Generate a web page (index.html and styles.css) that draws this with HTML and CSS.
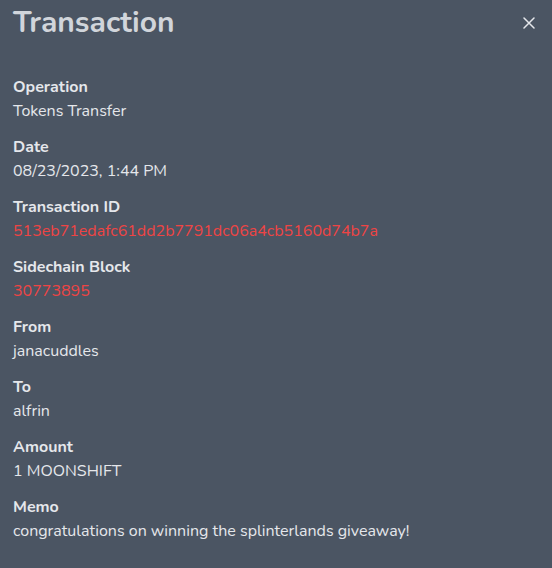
FILE: index.html
```html
<!DOCTYPE html>
<html>
<head>
<meta charset="utf-8">
<link rel="stylesheet" href="styles.css">
</head>
<body>
<div class="modal">
  <div class="header">
    <h1 class="title">Transaction</h1>
    <button class="close" aria-label="Close">
      <svg width="12" height="12" viewBox="0 0 12 12"><path d="M1 1L11 11M11 1L1 11" stroke="#e5e7eb" stroke-width="1.5" stroke-linecap="round"/></svg>
    </button>
  </div>
  <dl class="fields">
    <div class="field"><dt>Operation</dt><dd>Tokens Transfer</dd></div>
    <div class="field"><dt>Date</dt><dd>08/23/2023, 1:44 PM</dd></div>
    <div class="field"><dt>Transaction ID</dt><dd class="link">513eb71edafc61dd2b7791dc06a4cb5160d74b7a</dd></div>
    <div class="field"><dt>Sidechain Block</dt><dd class="link">30773895</dd></div>
    <div class="field"><dt>From</dt><dd>janacuddles</dd></div>
    <div class="field"><dt>To</dt><dd>alfrin</dd></div>
    <div class="field"><dt>Amount</dt><dd>1 MOONSHIFT</dd></div>
    <div class="field"><dt>Memo</dt><dd>congratulations on winning the splinterlands giveaway!</dd></div>
  </dl>
</div>
</body>
</html>
```
FILE: styles.css
```css
html, body {
  margin: 0;
  padding: 0;
  background: #4b5563;
  height: 100%;
}
body {
  font-family: "Nunito", "Open Sans", sans-serif;
  color: #e5e7eb;
}
.modal {
  padding: 0 13px;
}
.header {
  display: flex;
  justify-content: space-between;
  align-items: center;
  height: 46px;
}
.title {
  margin: 0;
  font-size: 30px;
  font-weight: 700;
  color: #d1d5db;
  line-height: 36px;
}
.close {
  background: none;
  border: 0;
  padding: 0;
  margin-right: 4px;
  display: flex;
}
.fields {
  margin: 0;
  padding-top: 29px;
  display: flex;
  flex-direction: column;
  gap: 12px;
}
.field dt {
  font-weight: 700;
  font-size: 16px;
  line-height: 24px;
  color: #e5e7eb;
}
.field dd {
  margin: 0;
  font-size: 16px;
  line-height: 24px;
  color: #e5e7eb;
}
.field dd.link {
  color: #ef4444;
}
```
